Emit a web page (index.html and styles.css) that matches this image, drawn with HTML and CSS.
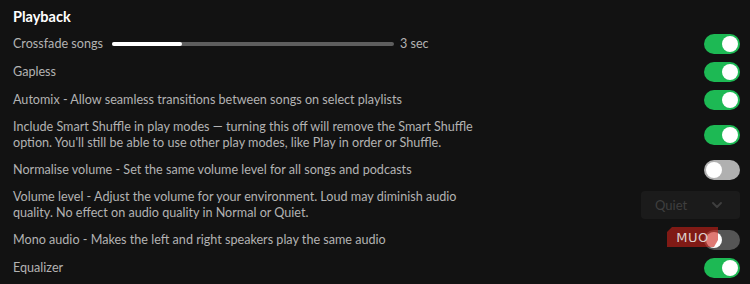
FILE: index.html
```html
<!DOCTYPE html>
<html>
<head>
<meta charset="utf-8">
<link rel="stylesheet" href="styles.css">
</head>
<body>
<section class="panel">
  <h2 class="heading">Playback</h2>
  <div class="row">
    <div class="label crossfade">
      <span>Crossfade songs</span>
      <div class="slider"><div class="slider-fill"></div></div>
      <span class="slider-value">3 sec</span>
    </div>
    <span class="toggle on"><span class="knob"></span></span>
  </div>
  <div class="row">
    <div class="label">Gapless</div>
    <span class="toggle on"><span class="knob"></span></span>
  </div>
  <div class="row">
    <div class="label">Automix - Allow seamless transitions between songs on select playlists</div>
    <span class="toggle on"><span class="knob"></span></span>
  </div>
  <div class="row">
    <div class="label">Include Smart Shuffle in play modes — turning this off will remove the Smart Shuffle option. You'll still be able to use other play modes, like Play in order or Shuffle.</div>
    <span class="toggle on"><span class="knob"></span></span>
  </div>
  <div class="row">
    <div class="label">Normalise volume - Set the same volume level for all songs and podcasts</div>
    <span class="toggle off"><span class="knob"></span></span>
  </div>
  <div class="row">
    <div class="label">Volume level - Adjust the volume for your environment. Loud may diminish audio quality. No effect on audio quality in Normal or Quiet.</div>
    <div class="select"><span>Quiet</span>
      <svg class="chev" width="10" height="6" viewBox="0 0 10 6"><path d="M1 1l4 4 4-4" fill="none" stroke="#3f3f3f" stroke-width="1.8" stroke-linecap="round" stroke-linejoin="round"/></svg>
    </div>
  </div>
  <div class="row">
    <div class="label">Mono audio - Makes the left and right speakers play the same audio</div>
    <span class="toggle disabled"><span class="knob"></span>
      <span class="muo"><span class="muo-text">MUO</span></span>
    </span>
  </div>
  <div class="row">
    <div class="label">Equalizer</div>
    <span class="toggle on"><span class="knob"></span></span>
  </div>
</section>
</body>
</html>
```
FILE: styles.css
```css
html, body {
  margin: 0;
  padding: 0;
  background: #121212;
}
body {
  font-family: "Lato", "Noto Sans", sans-serif;
  color: #b3b3b3;
  font-size: 12.6px;
  overflow: hidden;
}
.panel {
  padding: 0 10px 0 13px;
  width: 727px;
}
.heading {
  margin: 0;
  height: 30px;
  line-height: 34px;
  font-size: 14.5px;
  font-weight: 700;
  color: #ffffff;
}
.row {
  display: flex;
  align-items: center;
  justify-content: space-between;
  padding: 5px 0;
}
.label {
  line-height: 16px;
  min-height: 18px;
  display: flex;
  align-items: center;
  max-width: 470px;
}
.crossfade {
  max-width: none;
}
.slider {
  width: 282px;
  height: 4px;
  margin: 0 6px 0 9px;
  border-radius: 2px;
  background: #5e5e5e;
}
.slider-fill {
  width: 70px;
  height: 4px;
  border-radius: 2px;
  background: #ffffff;
}
.toggle {
  position: relative;
  width: 36px;
  height: 20px;
  margin: -1px 0;
  border-radius: 10px;
  flex: none;
  display: block;
}
.toggle .knob {
  position: absolute;
  top: 2px;
  width: 16px;
  height: 16px;
  border-radius: 50%;
  background: #ffffff;
}
.toggle.on { background: #1db954; }
.toggle.on .knob { right: 2px; }
.toggle.off { background: #b0b0b0; }
.toggle.off .knob { left: 2px; }
.toggle.disabled { background: #555555; }
.toggle.disabled .knob { left: 2px; }
.select {
  width: 99px;
  height: 28px;
  border-radius: 4px;
  background: #1b1b1b;
  display: flex;
  align-items: center;
  justify-content: space-between;
  padding: 0 18px 0 14px;
  box-sizing: border-box;
  color: #3f3f3f;
  font-size: 13px;
}
.muo {
  position: absolute;
  left: -37px;
  top: -3px;
  width: 51px;
  height: 20px;
  background: rgba(202, 32, 24, 0.6);
  clip-path: polygon(5px 0, 51px 0, 51px 13px, 47px 20px, 0 20px, 0 5px);
  display: flex;
  align-items: center;
  justify-content: center;
}
.muo-text {
  font-family: "DejaVu Sans", sans-serif;
  font-size: 13px;
  letter-spacing: 0.5px;
  color: #dccfcd;
  font-weight: 400;
}
```
